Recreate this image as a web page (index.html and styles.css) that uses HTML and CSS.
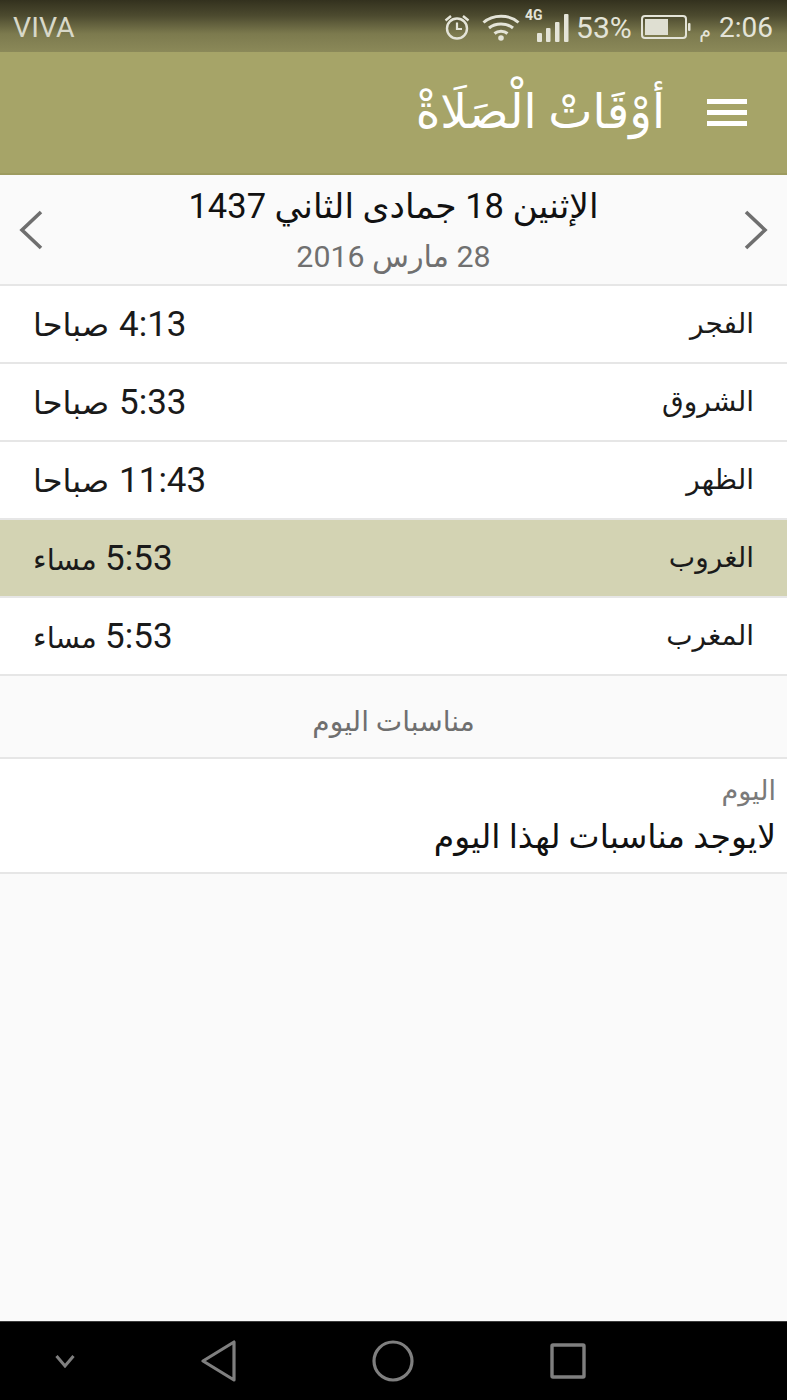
FILE: index.html
```html
<!DOCTYPE html>
<html lang="ar" dir="rtl">
<head>
<meta charset="UTF-8">
<meta name="viewport" content="width=device-width, initial-scale=1.0">
<title>أوقات الصلاة</title>
<link rel="stylesheet" href="styles.css">
</head>
<body>
<div class="phone">
  <div class="statusbar" dir="ltr">
    <span class="carrier">VIVA</span>
    <div class="status-right">
      <svg class="ic-alarm" width="28" height="28" viewBox="0 0 28 28" fill="none" stroke="#e4e4d8" stroke-width="2.4">
        <circle cx="14" cy="15.5" r="10"/>
        <path d="M14 9.5v6.5h5" stroke-width="2.2"/>
        <path d="M2.5 7.5 8 3M25.500 7.500 20 3" stroke-width="2.4"/>
      </svg>
      <svg class="ic-wifi" width="38" height="28" viewBox="0 0 38 28" fill="none" stroke="#e4e4d8" stroke-width="3">
        <path d="M1.500 9.500C11 1 27 1 36.500 9.500"/>
        <path d="M7 15C13.500 9.500 24.500 9.500 31 15"/>
        <path d="M12.500 20.500C16 17.500 22 17.500 25.500 20.500"/>
        <circle cx="19" cy="25" r="2.800" fill="#e4e4d8" stroke="none"/>
      </svg>
      <div class="signal">
        <span class="net">4G</span>
        <svg width="34" height="28" viewBox="0 0 34 28" fill="#e4e4d8">
          <rect x="1" y="19" width="5" height="9" rx="1"/>
          <rect x="10" y="14" width="4.500" height="14" rx="1"/>
          <rect x="19" y="8" width="4.500" height="20" rx="1"/>
          <rect x="28" y="0" width="4.500" height="28" rx="1"/>
        </svg>
      </div>
      <span class="status-pct">53%</span>
      <svg class="ic-batt" width="50" height="26" viewBox="0 0 50 26" fill="none">
        <rect x="1" y="2" width="44" height="22" rx="3" stroke="#e4e4d8" stroke-width="2"/>
        <rect x="4" y="5" width="23" height="16" fill="#dfdfd2"/>
        <rect x="47" y="9" width="2.500" height="8" rx="1" fill="#e4e4d8"/>
      </svg>
      <span class="status-am">م</span>
      <span class="status-text">2:06</span>
    </div>
  </div>

  <header class="appbar">
    <div class="menu"><span></span><span></span><span></span></div>
    <h1 class="apptitle">أوْقَاتْ الْصَلَاةْ</h1>
  </header>

  <div class="datebar">
    <svg class="chev" width="26" height="40" viewBox="0 0 26 40" fill="none" stroke="#6f6f6f" stroke-width="3.600">
      <path d="M3 2l19 18L3 38"/>
    </svg>
    <div class="dates">
      <div class="hijri">الإثنين 18 جمادى الثاني 1437</div>
      <div class="greg">28 مارس 2016</div>
    </div>
    <svg class="chev" width="26" height="40" viewBox="0 0 26 40" fill="none" stroke="#6f6f6f" stroke-width="3.600">
      <path d="M23 2L4 20l19 18"/>
    </svg>
  </div>

  <div class="row"><span class="name">الفجر</span><span class="time"><span class="num">4:13</span> صباحا</span></div>
  <div class="row"><span class="name">الشروق</span><span class="time"><span class="num">5:33</span> صباحا</span></div>
  <div class="row"><span class="name">الظهر</span><span class="time"><span class="num">11:43</span> صباحا</span></div>
  <div class="row current"><span class="name">الغروب</span><span class="time pm"><span class="num">5:53</span> مساء</span></div>
  <div class="row"><span class="name">المغرب</span><span class="time pm"><span class="num">5:53</span> مساء</span></div>

  <div class="section-title">مناسبات اليوم</div>
  <div class="event">
    <div class="event-day">اليوم</div>
    <div class="event-text">لايوجد مناسبات لهذا اليوم</div>
  </div>

  <div class="filler"></div>

  <nav class="navbar" dir="ltr">
    <svg class="nav-down" width="20" height="13" viewBox="0 0 20 13" fill="none" stroke="#7f7f7f" stroke-width="3">
      <path d="M1.500 1l8.500 10 8.500-10"/>
    </svg>
    <svg class="nav-back" width="36" height="42" viewBox="0 0 36 42" fill="none" stroke="#7f7f7f" stroke-width="3.200" stroke-linejoin="round">
      <path d="M33 2v38L2 21z"/>
    </svg>
    <svg class="nav-home" width="42" height="42" viewBox="0 0 42 42" fill="none" stroke="#7f7f7f" stroke-width="3.200">
      <circle cx="21" cy="21" r="19"/>
    </svg>
    <svg class="nav-recent" width="36" height="36" viewBox="0 0 36 36" fill="none" stroke="#7f7f7f" stroke-width="3.400" stroke-linejoin="round">
      <rect x="2" y="2" width="32" height="32" rx="1"/>
    </svg>
  </nav>
</div>
</body>
</html>
```

FILE: styles.css
```css
html, body {
  margin: 0;
  padding: 0;
}
body {
  font-family: Roboto, "DejaVu Sans", sans-serif;
  background-color: #fafafa;
}
.phone {
  width: 787px;
  height: 1400px;
  display: flex;
  flex-direction: column;
  overflow: hidden;
}
.statusbar {
  height: 52px;
  flex: none;
  display: flex;
  justify-content: space-between;
  align-items: center;
  padding: 2px 14px 0 13px;
  box-sizing: border-box;
  background: linear-gradient(to bottom, #33311e 0%, #4c4a2f 30%, #7c7a4e 65%, #8b8959 100%);
  color: #e4e4d8;
}
.carrier {
  font-size: 28.500px;
  color: #d8d8c8;
}
.status-right {
  display: flex;
  align-items: center;
}
.ic-alarm {
  margin-right: 11px;
}
.ic-wifi {
  margin-right: 14px;
}
.signal {
  position: relative;
  width: 36px;
  height: 30px;
  margin-right: 6px;
}
.signal svg {
  display: block;
  position: absolute;
  right: 0;
  bottom: 0;
}
.net {
  position: absolute;
  left: -9px;
  top: -5px;
  font-size: 14px;
  font-weight: 700;
}
.status-text {
  font-size: 28px;
}
.status-pct {
  font-size: 30px;
}
.ic-batt {
  margin-left: 9px;
  margin-right: 8.500px;
}
.status-am {
  font-size: 19px;
  margin-right: 8px;
  margin-top: 6px;
}
.appbar {
  height: 123px;
  flex: none;
  box-sizing: border-box;
  background-color: #a6a468;
  border-bottom: 2px solid #9d9b5f;
  display: flex;
  align-items: center;
  padding: 0 40px 0 0;
}
.menu {
  width: 40px;
  display: flex;
  flex-direction: column;
  gap: 6px;
}
.menu span {
  display: block;
  height: 5px;
  background-color: #fff;
}
.apptitle {
  margin: 0 42px 2px 0;
  font-size: 47px;
  font-weight: 400;
  color: #fff;
  line-height: 1;
}
.datebar {
  height: 111px;
  flex: none;
  box-sizing: border-box;
  background-color: #fafafa;
  border-bottom: 2px solid #e6e6e6;
  display: flex;
  align-items: center;
  justify-content: space-between;
  padding: 0 18px 0 18px;
}
.chev {
  flex: none;
}
.dates {
  text-align: center;
  flex: 1;
}
.hijri {
  font-size: 34.500px;
  line-height: 50px;
  margin-top: 2px;
  color: #111;
}
.greg {
  font-size: 30.300px;
  line-height: 48px;
  margin-top: 2px;
  color: #707070;
}
.row {
  height: 78px;
  flex: none;
  box-sizing: border-box;
  background-color: #fff;
  border-bottom: 2px solid #e6e6e6;
  display: flex;
  align-items: center;
  justify-content: space-between;
  padding: 0 33px;
  color: #1a1a1a;
}
.row.current {
  background-color: #d3d3b3;
}
.name {
  font-size: 28px;
  margin-bottom: 2px;
}
.time {
  font-size: 32px;
}
.time.pm {
  font-size: 29px;
}
.num {
  font-size: 35px;
  margin-left: 2px;
}
.time.pm .num {
  margin-left: 1px;
}
.section-title {
  height: 83px;
  flex: none;
  box-sizing: border-box;
  background-color: #fafafa;
  border-bottom: 2px solid #e6e6e6;
  display: flex;
  align-items: center;
  justify-content: center;
  padding-top: 10px;
  font-size: 28px;
  color: #6f6f6f;
}
.event {
  height: 115px;
  flex: none;
  box-sizing: border-box;
  background-color: #fff;
  border-bottom: 2px solid #e6e6e6;
  padding: 15px 11px 0 11px;
}
.event-day {
  font-size: 27px;
  line-height: 34px;
  color: #7a7a7a;
}
.event-text {
  font-size: 33px;
  line-height: 50px;
  margin-top: 4px;
  color: #111;
}
.filler {
  flex: 1;
  background-color: #fafafa;
}
.navbar {
  height: 79px;
  flex: none;
  box-sizing: border-box;
  background-color: #000;
  border-top: 1px solid #3c3c3c;
  display: flex;
  align-items: center;
}
.nav-down {
  margin-left: 55px;
}
.nav-back {
  margin-left: 126px;
}
.nav-home {
  margin-left: 135px;
}
.nav-recent {
  margin-left: 136px;
}
```
